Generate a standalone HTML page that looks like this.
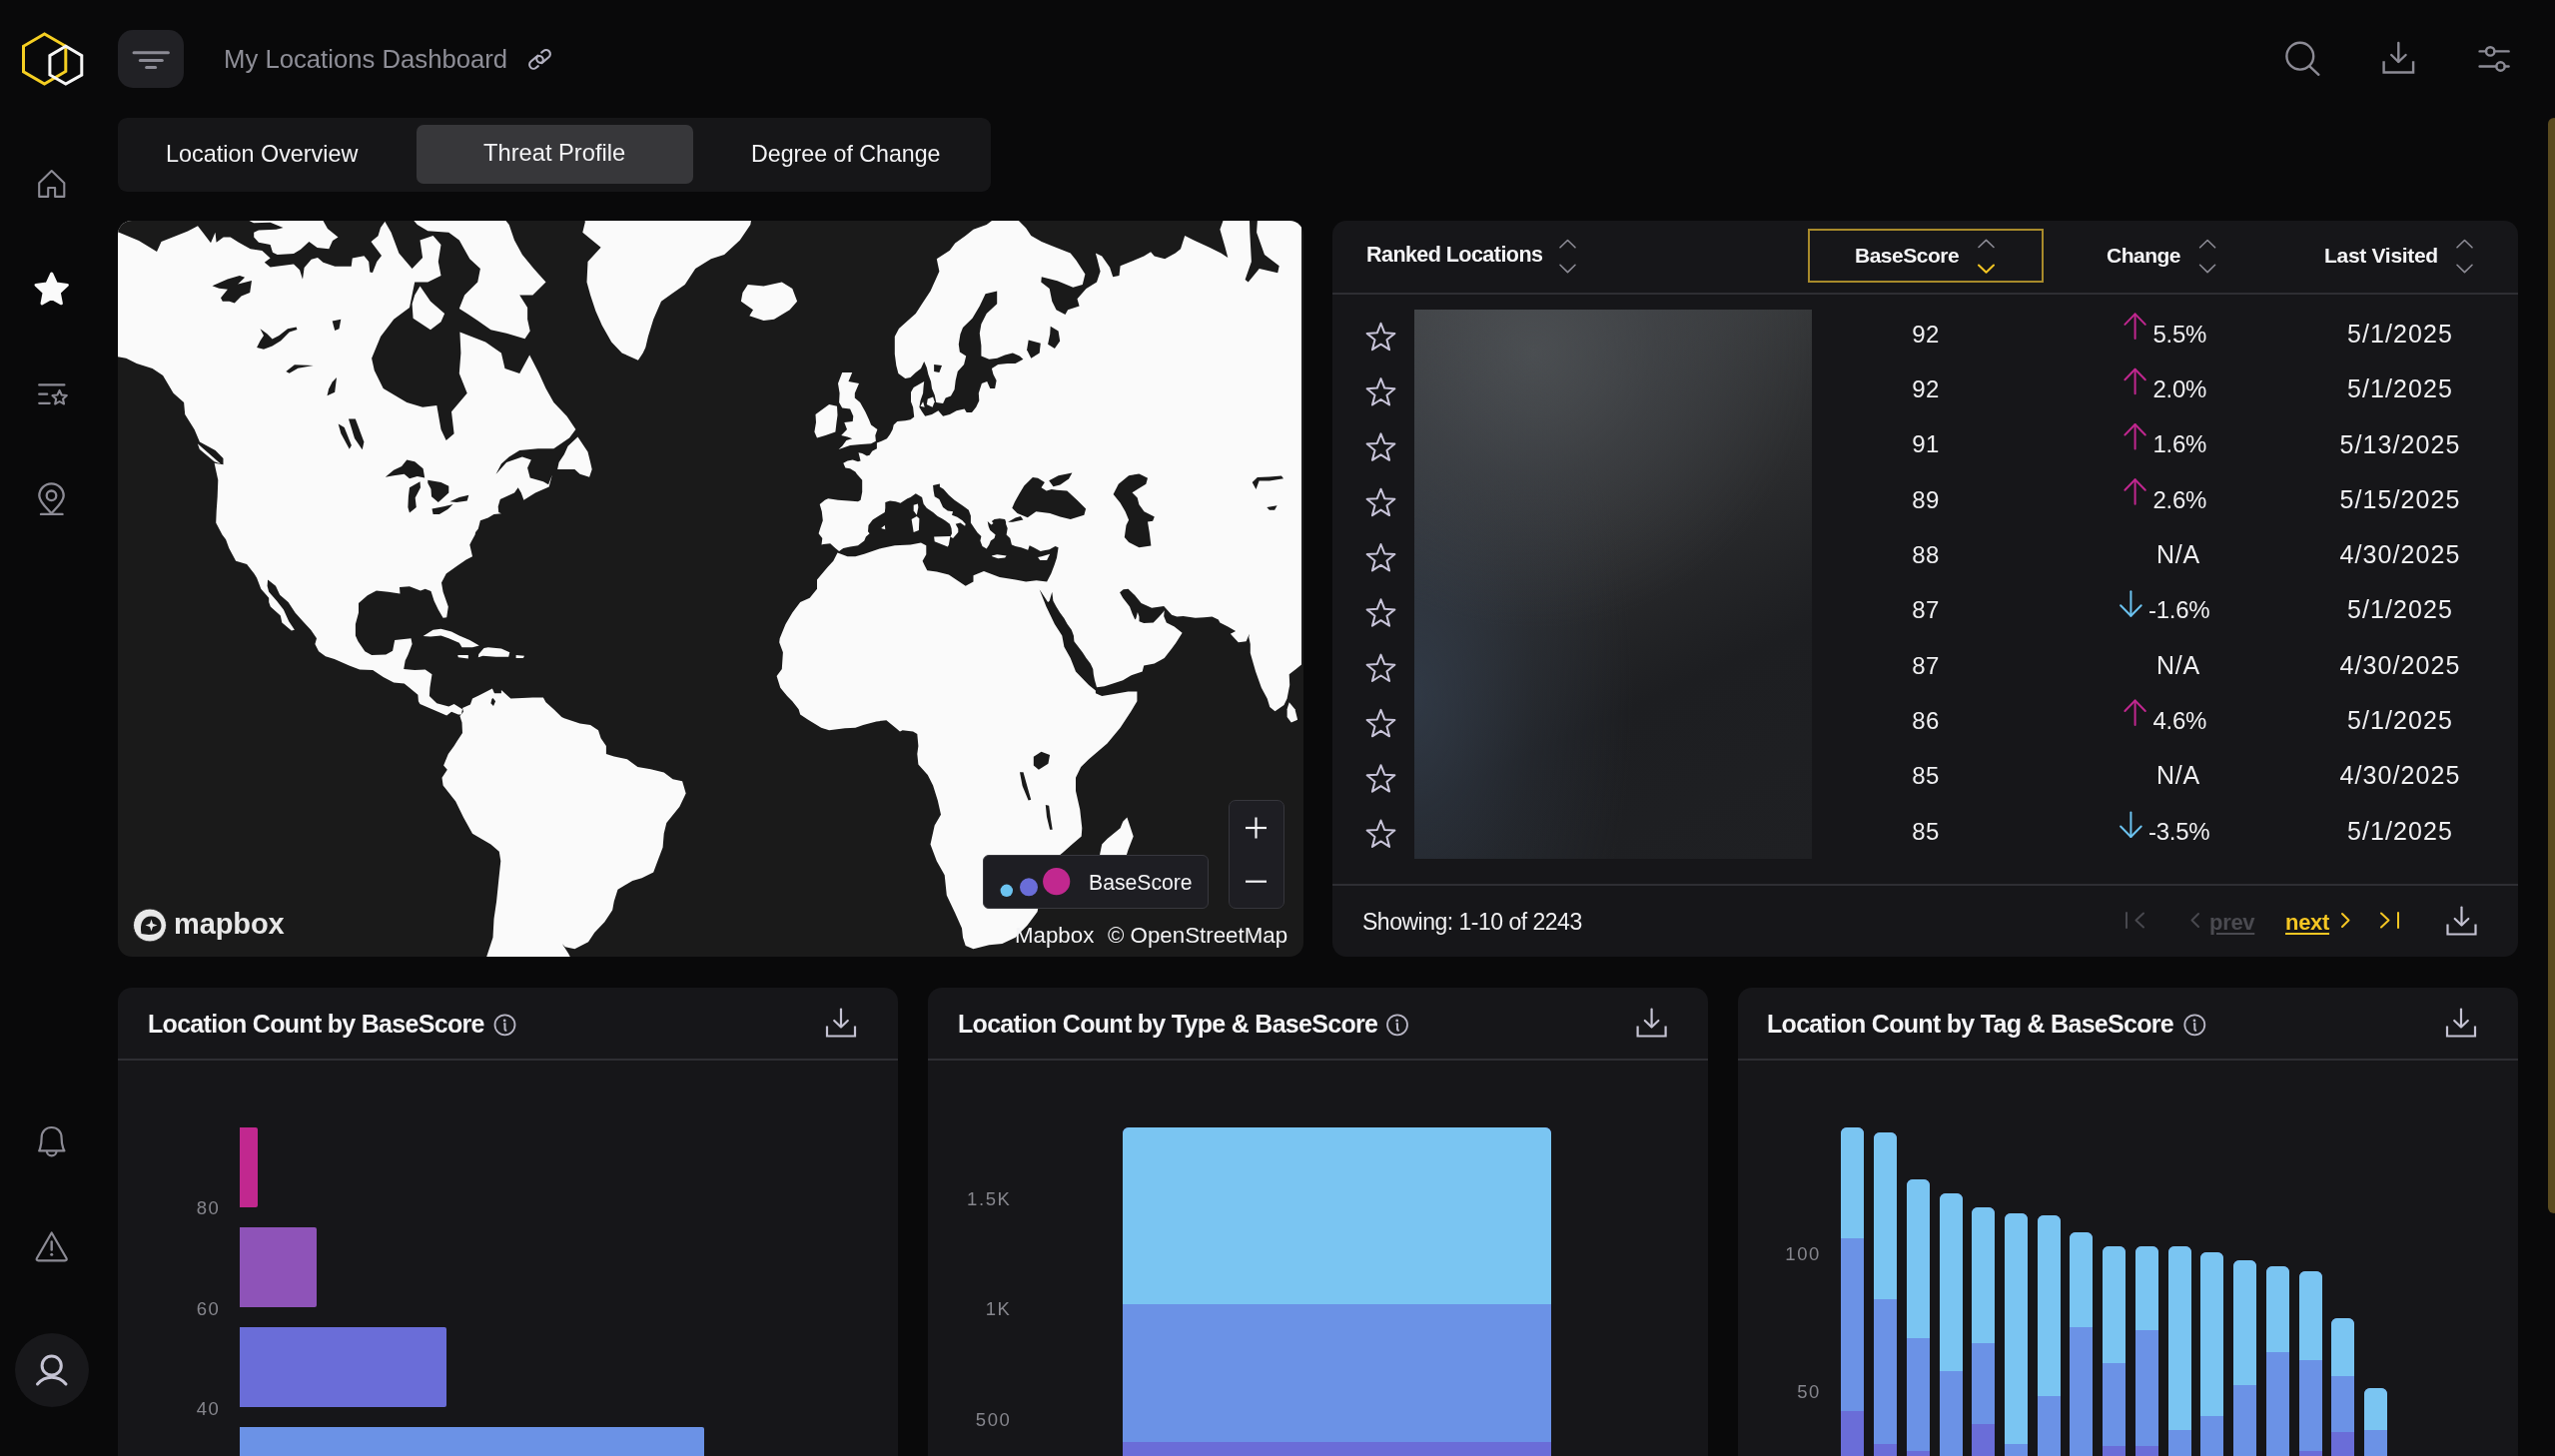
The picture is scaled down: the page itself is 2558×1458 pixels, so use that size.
<!DOCTYPE html>
<html><head><meta charset="utf-8"><style>
*{box-sizing:border-box;margin:0;padding:0}
html,body{width:2558px;height:1458px;overflow:hidden;background:#09090a;font-family:"Liberation Sans",sans-serif;color:#f2f2f4}
.a{position:absolute;white-space:nowrap;will-change:transform}
.panel{position:absolute;background:#161619;border-radius:14px;overflow:hidden}
svg.a{overflow:visible}
.ic{fill:none;stroke:#8c8b95;stroke-width:2.4;stroke-linecap:round;stroke-linejoin:round}
.tab{position:absolute;font-size:23.7px;color:#f4f4f6;line-height:1}
.th{position:absolute;font-size:21px;font-weight:bold;color:#f4f4f6;letter-spacing:-0.5px;line-height:1}
.num{position:absolute;font-size:24px;color:#f0f0f2;line-height:1}
.ct{position:absolute;font-size:25px;font-weight:bold;color:#f4f4f6;letter-spacing:-0.7px;line-height:1}
.yt{position:absolute;font-size:18.5px;color:#86868d;letter-spacing:1.6px;line-height:1;text-align:right}
</style></head><body>
<svg class="a" style="left:0;top:0" width="110" height="110" viewBox="0 0 110 110"><polygon points="44.5,34 23.5,46.3 23.5,71.8 44.5,84 65.8,71.5 65.8,46.3" fill="none" stroke="#f5cf22" stroke-width="3"/><polygon points="65.8,46.3 49.9,55.6 49.9,75 65.8,84 81.8,75 81.8,55.6" fill="none" stroke="#f6f6f6" stroke-width="3"/></svg>
<div class="a" style="left:118px;top:30px;width:66px;height:58px;background:#212125;border-radius:15px"></div>
<svg class="a ic" style="left:0;top:0" width="200" height="100"><line x1="134" y1="52.8" x2="168.4" y2="52.8" stroke-width="3"/><line x1="140.3" y1="60.4" x2="162.3" y2="60.4" stroke-width="3"/><line x1="146.6" y1="67.6" x2="155.6" y2="67.6" stroke-width="3"/></svg>
<div class="a" style="left:223.9px;top:46.7px;font-size:25.7px;line-height:1;color:#8e8e97;font-weight:400;letter-spacing:0px;">My Locations Dashboard</div>
<svg class="a ic" style="left:0;top:0" width="600" height="100"><g transform="translate(540.5,59.4) rotate(-40)" stroke-width="2.1" stroke="#b3b1c0"><path d="M-5.6,4.1 L-8.2,4.1 A4.1,4.1 0 0 1 -8.2,-4.1 L-0.9999999999999996,-4.1 A4.1,4.1 0 0 1 -0.9999999999999996,4.1"/><path d="M5.6,-4.1 L8.2,-4.1 A4.1,4.1 0 0 1 8.2,4.1 L0.9999999999999996,4.1 A4.1,4.1 0 0 1 0.9999999999999996,-4.1"/></g></svg>
<svg class="a ic" style="left:0;top:0" width="2558" height="100" ><circle cx="2302.8" cy="56.2" r="13.4"/><line x1="2312.4" y1="66.3" x2="2321.4" y2="74.8"/><line x1="2401.3" y1="43" x2="2401.3" y2="61.5"/><polyline points="2394.2,55 2401.3,62 2408.6,55"/><polyline points="2386.6,61.2 2386.6,72.5 2416.1,72.5 2416.1,61.2" stroke-linecap="butt" stroke-linejoin="miter"/><line x1="2482.6" y1="51.4" x2="2489" y2="51.4"/><line x1="2497.4" y1="51.4" x2="2511.6" y2="51.4"/><circle cx="2493.2" cy="51.4" r="4.2"/><line x1="2482.6" y1="66.5" x2="2499.3" y2="66.5"/><line x1="2507.7" y1="66.5" x2="2511.6" y2="66.5"/><circle cx="2503.5" cy="66.5" r="4.2"/></svg>
<svg class="a ic" style="left:0;top:0" width="110" height="1458" stroke="#8c8b95"><path d="M39.2,183.2 L51.7,171 L64.3,183.2 L64.3,196.9 L55.1,196.9 L55.1,188 L48.2,188 L48.2,196.9 L39.2,196.9 Z" stroke-width="2.1"/><line x1="39.2" y1="385.4" x2="64.4" y2="385.4" stroke-width="2.2"/><line x1="39.2" y1="394.7" x2="47.2" y2="394.7" stroke-width="2.2"/><line x1="39.2" y1="403.8" x2="49.7" y2="403.8" stroke-width="2.2"/><polygon points="59.60,390.80 61.72,395.49 66.83,396.05 63.02,399.51 64.07,404.55 59.60,402.00 55.13,404.55 56.18,399.51 52.37,396.05 57.48,395.49" stroke-width="2"/><path d="M51.5,514 C46.5,508.5 39.3,502.5 39.3,496.5 A12.2,12.2 0 0 1 63.7,496.5 C63.7,502.5 56.5,508.5 51.5,514 Z" stroke-width="2.3"/><circle cx="51.5" cy="496.3" r="4.8" stroke-width="2.3"/><line x1="41" y1="514.9" x2="62.5" y2="514.9"/><path d="M39.2,1152.4 L64.4,1152.4 C62.2,1148.5 61.6,1144 61.6,1139.5 C61.6,1133 57.2,1129 51.6,1129 C46,1129 41.6,1133 41.6,1139.5 C41.6,1144 41,1148.5 39.2,1152.4 Z" stroke-width="2.2"/><path d="M46.9,1152.8 A4.8,4.6 0 0 0 56.5,1152.8" stroke-width="2.2"/><path d="M51.7,1234.5 L66.5,1260 C67.2,1261.3 66.5,1262.3 65,1262.3 L38.4,1262.3 C36.9,1262.3 36.2,1261.3 36.9,1260 Z" stroke-width="2.2"/><line x1="51.7" y1="1243.5" x2="51.7" y2="1251.5" stroke-width="2.4"/><circle cx="51.7" cy="1256.3" r="1.5" fill="#8c8b95" stroke="none"/></svg>
<svg class="a" style="left:0;top:0" width="110" height="400"><polygon points="51.70,274.00 56.40,284.03 67.39,285.40 59.31,292.97 61.40,303.85 51.70,298.50 42.00,303.85 44.09,292.97 36.01,285.40 47.00,284.03" fill="#fafafa" stroke="#fafafa" stroke-width="3" stroke-linejoin="round"/></svg>
<div class="a" style="left:14.8px;top:1335px;width:74px;height:74px;border-radius:50%;background:#18181b"></div>
<svg class="a" style="left:0;top:0" width="110" height="1458" fill="none" stroke="#c5c3d3" stroke-width="3" stroke-linecap="round"><circle cx="51.7" cy="1367.5" r="9.6"/><path d="M37.5,1386 C45,1377 58.5,1377 66,1386"/></svg>
<div class="a" style="left:118px;top:118px;width:874px;height:74px;background:#161618;border-radius:9px"></div>
<div class="a" style="left:416.8px;top:125.2px;width:276.7px;height:58.8px;background:#37373a;border-radius:7px"></div>
<div class="a" style="left:166.3px;top:142.6px;font-size:23.4px;line-height:1;color:#f4f4f6;font-weight:400;letter-spacing:0px;">Location Overview</div>
<div class="a" style="left:484.1px;top:142.3px;font-size:23.7px;line-height:1;color:#f4f4f6;font-weight:400;letter-spacing:0px;">Threat Profile</div>
<div class="a" style="left:751.5px;top:142.8px;font-size:23.2px;line-height:1;color:#f4f4f6;font-weight:400;letter-spacing:0px;">Degree of Change</div>
<div class="a" style="left:2550.5px;top:118px;width:12px;height:1097px;background:#5b4b1f;border-radius:6px"></div>
<div class="panel" style="left:1333.7px;top:221px;width:1187.3px;height:737px;border-radius:14px"></div>
<div class="a" style="left:1368.2px;top:244.6px;font-size:21.5px;line-height:1;color:#f4f4f6;font-weight:700;letter-spacing:-0.55px;">Ranked Locations</div>
<svg class="a" style="left:0;top:0" width="2558" height="400" fill="none" stroke-width="1.6" stroke-linecap="round" stroke-linejoin="round"><polyline points="1562.0,247.8 1569.5,240.5 1577.0,247.8" stroke="#8c8b95"/><polyline points="1562.0,265.3 1569.5,272.6 1577.0,265.3" stroke="#8c8b95"/></svg>
<div class="a" style="left:1809.8px;top:229.2px;width:235.8px;height:54px;border:2px solid #a88a2b"></div>
<div class="a" style="left:1857.0px;top:245.0px;font-size:21px;line-height:1;color:#f4f4f6;font-weight:700;letter-spacing:-0.5px;">BaseScore</div>
<svg class="a" style="left:0;top:0" width="2558" height="400" fill="none" stroke-width="1.6" stroke-linecap="round" stroke-linejoin="round"><polyline points="1981,247.5 1988.5,240.3 1996,247.5" stroke="#8c8b95"/><polyline points="1981,265.5 1988.5,272.8 1996,265.5" stroke="#f5c623" stroke-width="2"/></svg>
<div class="a" style="left:2109.4px;top:245.0px;font-size:21px;line-height:1;color:#f4f4f6;font-weight:700;letter-spacing:-0.5px;">Change</div>
<svg class="a" style="left:0;top:0" width="2558" height="400" fill="none" stroke-width="1.6" stroke-linecap="round" stroke-linejoin="round"><polyline points="2202.6,247.8 2210.1,240.5 2217.6,247.8" stroke="#8c8b95"/><polyline points="2202.6,265.3 2210.1,272.6 2217.6,265.3" stroke="#8c8b95"/></svg>
<div class="a" style="left:2326.6px;top:245.0px;font-size:21px;line-height:1;color:#f4f4f6;font-weight:700;letter-spacing:-0.3px;">Last Visited</div>
<svg class="a" style="left:0;top:0" width="2558" height="400" fill="none" stroke-width="1.6" stroke-linecap="round" stroke-linejoin="round"><polyline points="2460.0,247.8 2467.5,240.5 2475.0,247.8" stroke="#8c8b95"/><polyline points="2460.0,265.3 2467.5,272.6 2475.0,265.3" stroke="#8c8b95"/></svg>
<div class="a" style="left:1333.7px;top:293.3px;width:1187.3px;height:2px;background:#2e2e33"></div>
<div class="a" style="left:1415.7px;top:309.8px;width:397.5px;height:550.2px;background:radial-gradient(ellipse 70% 50% at 30% 8%, rgba(80,84,88,0.75) 0%, rgba(72,75,80,0.45) 45%, rgba(60,64,70,0) 100%),radial-gradient(ellipse 55% 75% at 0% 70%, rgba(50,60,74,0.85) 0%, rgba(45,52,62,0.4) 55%, rgba(40,45,52,0) 100%),linear-gradient(155deg, #404244 0%, #37393b 22%, #2a2b2d 45%, #1d1e21 68%, #1f2023 100%)"></div>
<div class="a" style="left:1627.7px;width:600px;text-align:center;top:322.8px;font-size:24px;line-height:1;color:#f0f0f2;font-weight:400;letter-spacing:0.3px;">92</div>
<div class="a" style="left:2102.5px;width:600px;text-align:center;top:321.9px;font-size:25px;line-height:1;color:#f0f0f2;font-weight:400;letter-spacing:1.1px;">5/1/2025</div>
<div class="a" style="left:1900px;text-align:right;top:322.8px;font-size:24px;line-height:1;color:#f0f0f2;letter-spacing:-0.3px;width:309px">5.5%</div>
<div class="a" style="left:1627.7px;width:600px;text-align:center;top:378.1px;font-size:24px;line-height:1;color:#f0f0f2;font-weight:400;letter-spacing:0.3px;">92</div>
<div class="a" style="left:2102.5px;width:600px;text-align:center;top:377.2px;font-size:25px;line-height:1;color:#f0f0f2;font-weight:400;letter-spacing:1.1px;">5/1/2025</div>
<div class="a" style="left:1900px;text-align:right;top:378.1px;font-size:24px;line-height:1;color:#f0f0f2;letter-spacing:-0.3px;width:309px">2.0%</div>
<div class="a" style="left:1627.7px;width:600px;text-align:center;top:433.4px;font-size:24px;line-height:1;color:#f0f0f2;font-weight:400;letter-spacing:0.3px;">91</div>
<div class="a" style="left:2102.5px;width:600px;text-align:center;top:432.5px;font-size:25px;line-height:1;color:#f0f0f2;font-weight:400;letter-spacing:1.1px;">5/13/2025</div>
<div class="a" style="left:1900px;text-align:right;top:433.4px;font-size:24px;line-height:1;color:#f0f0f2;letter-spacing:-0.3px;width:309px">1.6%</div>
<div class="a" style="left:1627.7px;width:600px;text-align:center;top:488.7px;font-size:24px;line-height:1;color:#f0f0f2;font-weight:400;letter-spacing:0.3px;">89</div>
<div class="a" style="left:2102.5px;width:600px;text-align:center;top:487.8px;font-size:25px;line-height:1;color:#f0f0f2;font-weight:400;letter-spacing:1.1px;">5/15/2025</div>
<div class="a" style="left:1900px;text-align:right;top:488.7px;font-size:24px;line-height:1;color:#f0f0f2;letter-spacing:-0.3px;width:309px">2.6%</div>
<div class="a" style="left:1627.7px;width:600px;text-align:center;top:544.0px;font-size:24px;line-height:1;color:#f0f0f2;font-weight:400;letter-spacing:0.3px;">88</div>
<div class="a" style="left:2102.5px;width:600px;text-align:center;top:543.1px;font-size:25px;line-height:1;color:#f0f0f2;font-weight:400;letter-spacing:1.1px;">4/30/2025</div>
<div class="a" style="left:1880.5px;width:600px;text-align:center;top:543.1px;font-size:25px;line-height:1;color:#f0f0f2;font-weight:400;letter-spacing:0.8px;">N/A</div>
<div class="a" style="left:1627.7px;width:600px;text-align:center;top:599.3px;font-size:24px;line-height:1;color:#f0f0f2;font-weight:400;letter-spacing:0.3px;">87</div>
<div class="a" style="left:2102.5px;width:600px;text-align:center;top:598.4px;font-size:25px;line-height:1;color:#f0f0f2;font-weight:400;letter-spacing:1.1px;">5/1/2025</div>
<div class="a" style="left:1900px;text-align:right;top:599.3px;font-size:24px;line-height:1;color:#f0f0f2;letter-spacing:-0.3px;width:312.3px">-1.6%</div>
<div class="a" style="left:1627.7px;width:600px;text-align:center;top:654.6px;font-size:24px;line-height:1;color:#f0f0f2;font-weight:400;letter-spacing:0.3px;">87</div>
<div class="a" style="left:2102.5px;width:600px;text-align:center;top:653.7px;font-size:25px;line-height:1;color:#f0f0f2;font-weight:400;letter-spacing:1.1px;">4/30/2025</div>
<div class="a" style="left:1880.5px;width:600px;text-align:center;top:653.7px;font-size:25px;line-height:1;color:#f0f0f2;font-weight:400;letter-spacing:0.8px;">N/A</div>
<div class="a" style="left:1627.7px;width:600px;text-align:center;top:709.9px;font-size:24px;line-height:1;color:#f0f0f2;font-weight:400;letter-spacing:0.3px;">86</div>
<div class="a" style="left:2102.5px;width:600px;text-align:center;top:709.0px;font-size:25px;line-height:1;color:#f0f0f2;font-weight:400;letter-spacing:1.1px;">5/1/2025</div>
<div class="a" style="left:1900px;text-align:right;top:709.9px;font-size:24px;line-height:1;color:#f0f0f2;letter-spacing:-0.3px;width:309px">4.6%</div>
<div class="a" style="left:1627.7px;width:600px;text-align:center;top:765.2px;font-size:24px;line-height:1;color:#f0f0f2;font-weight:400;letter-spacing:0.3px;">85</div>
<div class="a" style="left:2102.5px;width:600px;text-align:center;top:764.3px;font-size:25px;line-height:1;color:#f0f0f2;font-weight:400;letter-spacing:1.1px;">4/30/2025</div>
<div class="a" style="left:1880.5px;width:600px;text-align:center;top:764.3px;font-size:25px;line-height:1;color:#f0f0f2;font-weight:400;letter-spacing:0.8px;">N/A</div>
<div class="a" style="left:1627.7px;width:600px;text-align:center;top:820.5px;font-size:24px;line-height:1;color:#f0f0f2;font-weight:400;letter-spacing:0.3px;">85</div>
<div class="a" style="left:2102.5px;width:600px;text-align:center;top:819.6px;font-size:25px;line-height:1;color:#f0f0f2;font-weight:400;letter-spacing:1.1px;">5/1/2025</div>
<div class="a" style="left:1900px;text-align:right;top:820.5px;font-size:24px;line-height:1;color:#f0f0f2;letter-spacing:-0.3px;width:312.3px">-3.5%</div>
<svg class="a" style="left:0;top:0" width="2558" height="1000" fill="none" stroke-linecap="round" stroke-linejoin="round"><g stroke="#c0278f" stroke-width="2"><line x1="2137.6" y1="314.4" x2="2137.6" y2="338.9"/><polyline points="2127.4,324.9 2137.6,314.4 2147.7999999999997,324.9"/></g><polygon points="1382.50,323.80 1386.20,333.30 1396.39,333.89 1388.49,340.35 1391.08,350.21 1382.50,344.70 1373.92,350.21 1376.51,340.35 1368.61,333.89 1378.80,333.30" stroke="#c9c5da" stroke-width="2"/><g stroke="#c0278f" stroke-width="2"><line x1="2137.6" y1="369.7" x2="2137.6" y2="394.2"/><polyline points="2127.4,380.2 2137.6,369.7 2147.7999999999997,380.2"/></g><polygon points="1382.50,379.10 1386.20,388.60 1396.39,389.19 1388.49,395.65 1391.08,405.51 1382.50,400.00 1373.92,405.51 1376.51,395.65 1368.61,389.19 1378.80,388.60" stroke="#c9c5da" stroke-width="2"/><g stroke="#c0278f" stroke-width="2"><line x1="2137.6" y1="425.0" x2="2137.6" y2="449.5"/><polyline points="2127.4,435.5 2137.6,425.0 2147.7999999999997,435.5"/></g><polygon points="1382.50,434.40 1386.20,443.90 1396.39,444.49 1388.49,450.95 1391.08,460.81 1382.50,455.30 1373.92,460.81 1376.51,450.95 1368.61,444.49 1378.80,443.90" stroke="#c9c5da" stroke-width="2"/><g stroke="#c0278f" stroke-width="2"><line x1="2137.6" y1="480.3" x2="2137.6" y2="504.8"/><polyline points="2127.4,490.8 2137.6,480.3 2147.7999999999997,490.8"/></g><polygon points="1382.50,489.70 1386.20,499.20 1396.39,499.79 1388.49,506.25 1391.08,516.11 1382.50,510.60 1373.92,516.11 1376.51,506.25 1368.61,499.79 1378.80,499.20" stroke="#c9c5da" stroke-width="2"/><polygon points="1382.50,545.00 1386.20,554.50 1396.39,555.09 1388.49,561.55 1391.08,571.41 1382.50,565.90 1373.92,571.41 1376.51,561.55 1368.61,555.09 1378.80,554.50" stroke="#c9c5da" stroke-width="2"/><g stroke="#6cc3f0" stroke-width="2"><line x1="2133.4" y1="592.3" x2="2133.4" y2="616.8"/><polyline points="2123.1,606.3 2133.4,616.8 2143.7000000000003,606.3"/></g><polygon points="1382.50,600.30 1386.20,609.80 1396.39,610.39 1388.49,616.85 1391.08,626.71 1382.50,621.20 1373.92,626.71 1376.51,616.85 1368.61,610.39 1378.80,609.80" stroke="#c9c5da" stroke-width="2"/><polygon points="1382.50,655.60 1386.20,665.10 1396.39,665.69 1388.49,672.15 1391.08,682.01 1382.50,676.50 1373.92,682.01 1376.51,672.15 1368.61,665.69 1378.80,665.10" stroke="#c9c5da" stroke-width="2"/><g stroke="#c0278f" stroke-width="2"><line x1="2137.6" y1="701.5" x2="2137.6" y2="726.0"/><polyline points="2127.4,712.0 2137.6,701.5 2147.7999999999997,712.0"/></g><polygon points="1382.50,710.90 1386.20,720.40 1396.39,720.99 1388.49,727.45 1391.08,737.31 1382.50,731.80 1373.92,737.31 1376.51,727.45 1368.61,720.99 1378.80,720.40" stroke="#c9c5da" stroke-width="2"/><polygon points="1382.50,766.20 1386.20,775.70 1396.39,776.29 1388.49,782.75 1391.08,792.61 1382.50,787.10 1373.92,792.61 1376.51,782.75 1368.61,776.29 1378.80,775.70" stroke="#c9c5da" stroke-width="2"/><g stroke="#6cc3f0" stroke-width="2"><line x1="2133.4" y1="813.5" x2="2133.4" y2="838.0"/><polyline points="2123.1,827.5 2133.4,838.0 2143.7000000000003,827.5"/></g><polygon points="1382.50,821.50 1386.20,831.00 1396.39,831.59 1388.49,838.05 1391.08,847.91 1382.50,842.40 1373.92,847.91 1376.51,838.05 1368.61,831.59 1378.80,831.00" stroke="#c9c5da" stroke-width="2"/></svg>
<div class="a" style="left:1333.7px;top:885px;width:1187.3px;height:2px;background:#2e2e33"></div>
<div class="a" style="left:1363.6px;top:911.5px;font-size:23px;line-height:1;color:#f0f0f2;font-weight:400;letter-spacing:-0.5px;">Showing: 1-10 of 2243</div>
<svg class="a" style="left:0;top:0" width="2558" height="1000" fill="none" stroke-linecap="round" stroke-linejoin="round" stroke-width="2"><line x1="2129" y1="914" x2="2129" y2="929" stroke="#48484e"/><polyline points="2146,914.5 2138.5,921.5 2146,928.5" stroke="#48484e"/><polyline points="2201,915 2194.5,921.5 2201,928" stroke="#48484e"/><polyline points="2345,915 2351.5,921.5 2345,928" stroke="#f5c623"/><polyline points="2384,914.5 2391.5,921.5 2384,928.5" stroke="#f5c623"/><line x1="2401" y1="914" x2="2401" y2="929" stroke="#f5c623"/></svg>
<div class="a" style="left:2211.5px;top:912.9px;font-size:22px;line-height:1;color:#4a4a50;font-weight:700;letter-spacing:-0.3px;text-decoration:underline;text-underline-offset:3px">prev</div>
<div class="a" style="left:2287.5px;top:912.9px;font-size:22px;line-height:1;color:#f5c623;font-weight:700;letter-spacing:-0.3px;text-decoration:underline;text-underline-offset:3px">next</div>
<svg class="a" style="left:0;top:0" width="2558" height="1458" fill="none" stroke="#c5c3d3" stroke-width="2.2" stroke-linecap="round" stroke-linejoin="round"><line x1="2464.5" y1="908.5" x2="2464.5" y2="926.0"/><polyline points="2457.7,920.0 2464.5,926.5 2471.3,920.0"/><polyline points="2450.5,925.5 2450.5,935.5 2478.5,935.5 2478.5,925.5" stroke-linecap="butt" stroke-linejoin="miter"/></svg>
<div class="panel" style="left:118.2px;top:989px;width:780.7px;height:520px"></div>
<div class="a" style="left:118.2px;top:1060px;width:780.7px;height:2px;background:#2e2e33"></div>
<div class="a" style="left:147.8px;top:1013.0px;font-size:25px;line-height:1;color:#f4f4f6;font-weight:700;letter-spacing:-0.7px;">Location Count by BaseScore</div>
<svg class="a" style="left:0;top:0" width="2558" height="1458" fill="none" stroke="#b9b7c6" stroke-width="1.8"><circle cx="505.5" cy="1026.3" r="10"/><path d="M504.2,1025.3 L505.5,1025.3 L505.5,1030.2 Q505.5,1031.8 507.3,1031.8" stroke-width="2"/><circle cx="505.2" cy="1021.9" r="1.4" fill="#b9b7c6" stroke="none"/></svg>
<div class="panel" style="left:929.2px;top:989px;width:781.3px;height:520px"></div>
<div class="a" style="left:929.2px;top:1060px;width:781.3px;height:2px;background:#2e2e33"></div>
<div class="a" style="left:958.7px;top:1013.0px;font-size:25px;line-height:1;color:#f4f4f6;font-weight:700;letter-spacing:-0.7px;">Location Count by Type &amp; BaseScore</div>
<svg class="a" style="left:0;top:0" width="2558" height="1458" fill="none" stroke="#b9b7c6" stroke-width="1.8"><circle cx="1399" cy="1026.3" r="10"/><path d="M1397.7,1025.3 L1399,1025.3 L1399,1030.2 Q1399,1031.8 1400.8,1031.8" stroke-width="2"/><circle cx="1398.7" cy="1021.9" r="1.4" fill="#b9b7c6" stroke="none"/></svg>
<div class="panel" style="left:1739.8px;top:989px;width:781.2px;height:520px"></div>
<div class="a" style="left:1739.8px;top:1060px;width:781.2px;height:2px;background:#2e2e33"></div>
<div class="a" style="left:1769.4px;top:1013.0px;font-size:25px;line-height:1;color:#f4f4f6;font-weight:700;letter-spacing:-0.7px;">Location Count by Tag &amp; BaseScore</div>
<svg class="a" style="left:0;top:0" width="2558" height="1458" fill="none" stroke="#b9b7c6" stroke-width="1.8"><circle cx="2197.3" cy="1026.3" r="10"/><path d="M2196.0,1025.3 L2197.3,1025.3 L2197.3,1030.2 Q2197.3,1031.8 2199.1000000000004,1031.8" stroke-width="2"/><circle cx="2197.0" cy="1021.9" r="1.4" fill="#b9b7c6" stroke="none"/></svg>
<svg class="a" style="left:0;top:0" width="2558" height="1458" fill="none" stroke="#c5c3d3" stroke-width="2.2" stroke-linecap="round" stroke-linejoin="round"><line x1="842.0" y1="1010.5" x2="842.0" y2="1028.0"/><polyline points="835.2,1022.0 842.0,1028.5 848.8,1022.0"/><polyline points="828.0,1027.5 828.0,1037.5 856.0,1037.5 856.0,1027.5" stroke-linecap="butt" stroke-linejoin="miter"/></svg>
<svg class="a" style="left:0;top:0" width="2558" height="1458" fill="none" stroke="#c5c3d3" stroke-width="2.2" stroke-linecap="round" stroke-linejoin="round"><line x1="1653.6" y1="1010.5" x2="1653.6" y2="1028.0"/><polyline points="1646.8,1022.0 1653.6,1028.5 1660.4,1022.0"/><polyline points="1639.6,1027.5 1639.6,1037.5 1667.6,1037.5 1667.6,1027.5" stroke-linecap="butt" stroke-linejoin="miter"/></svg>
<svg class="a" style="left:0;top:0" width="2558" height="1458" fill="none" stroke="#c5c3d3" stroke-width="2.2" stroke-linecap="round" stroke-linejoin="round"><line x1="2464.0" y1="1010.5" x2="2464.0" y2="1028.0"/><polyline points="2457.2,1022.0 2464.0,1028.5 2470.8,1022.0"/><polyline points="2450.0,1027.5 2450.0,1037.5 2478.0,1037.5 2478.0,1027.5" stroke-linecap="butt" stroke-linejoin="miter"/></svg>
<div class="a" style="left:240px;top:1128.7px;width:17.7px;height:80.1px;background:#c1288f;border-radius:0 2px 2px 0"></div>
<div class="a" style="left:240px;top:1228.5px;width:77.2px;height:79.8px;background:#8e53b8;border-radius:0 2px 2px 0"></div>
<div class="a" style="left:240px;top:1328.6px;width:206.8px;height:79.5px;background:#6a6dd8;border-radius:0 2px 2px 0"></div>
<div class="a" style="left:240px;top:1428.5px;width:464.9px;height:71.5px;background:#6b92e6;border-radius:0 2px 2px 0"></div>
<div class="a yt" style="left:150px;width:70.5px;top:1201.3px">80</div>
<div class="a yt" style="left:150px;width:70.5px;top:1302.1px">60</div>
<div class="a yt" style="left:150px;width:70.5px;top:1402.2px">40</div>
<div class="a" style="left:1123.5px;top:1128.7px;width:428.5px;height:400px;border-radius:6px 6px 0 0;overflow:hidden;background:#6a6dd8"><div style="position:absolute;left:0;top:0;width:100%;height:177.3px;background:#7ac5f2"></div><div style="position:absolute;left:0;top:177.3px;width:100%;height:137.9px;background:#6b92e6"></div></div>
<div class="a yt" style="left:930px;width:82.5px;top:1191.5px">1.5K</div>
<div class="a yt" style="left:930px;width:82.5px;top:1302.1px">1K</div>
<div class="a yt" style="left:930px;width:82.5px;top:1413.1px">500</div>
<div class="a" style="left:1843.4px;top:1128.7px;width:22.8px;height:371.3px;border-radius:6px 6px 0 0;overflow:hidden;background:#6b92e6"><div style="position:absolute;left:0;top:0;width:100%;height:111.3px;background:#7ac5f2"></div><div style="position:absolute;left:0;top:283.5px;width:100%;height:100px;background:#6a6dd8"></div></div>
<div class="a" style="left:1876.1px;top:1134px;width:22.8px;height:366.0px;border-radius:6px 6px 0 0;overflow:hidden;background:#6b92e6"><div style="position:absolute;left:0;top:0;width:100%;height:167.0px;background:#7ac5f2"></div><div style="position:absolute;left:0;top:311.5px;width:100%;height:100px;background:#6a6dd8"></div></div>
<div class="a" style="left:1908.8px;top:1181.2px;width:22.8px;height:318.8px;border-radius:6px 6px 0 0;overflow:hidden;background:#6b92e6"><div style="position:absolute;left:0;top:0;width:100%;height:158.6px;background:#7ac5f2"></div><div style="position:absolute;left:0;top:272.3px;width:100%;height:100px;background:#6a6dd8"></div></div>
<div class="a" style="left:1941.6px;top:1195.4px;width:22.8px;height:304.6px;border-radius:6px 6px 0 0;overflow:hidden;background:#6b92e6"><div style="position:absolute;left:0;top:0;width:100%;height:177.6px;background:#7ac5f2"></div></div>
<div class="a" style="left:1974.3px;top:1209.2px;width:22.8px;height:290.8px;border-radius:6px 6px 0 0;overflow:hidden;background:#6b92e6"><div style="position:absolute;left:0;top:0;width:100%;height:136.2px;background:#7ac5f2"></div><div style="position:absolute;left:0;top:216.8px;width:100%;height:100px;background:#6a6dd8"></div></div>
<div class="a" style="left:2007.0px;top:1214.7px;width:22.8px;height:285.3px;border-radius:6px 6px 0 0;overflow:hidden;background:#6b92e6"><div style="position:absolute;left:0;top:0;width:100%;height:230.5px;background:#7ac5f2"></div></div>
<div class="a" style="left:2039.7px;top:1217.4px;width:22.8px;height:282.6px;border-radius:6px 6px 0 0;overflow:hidden;background:#6b92e6"><div style="position:absolute;left:0;top:0;width:100%;height:180.6px;background:#7ac5f2"></div></div>
<div class="a" style="left:2072.4px;top:1234.1px;width:22.8px;height:265.9px;border-radius:6px 6px 0 0;overflow:hidden;background:#6b92e6"><div style="position:absolute;left:0;top:0;width:100%;height:94.6px;background:#7ac5f2"></div></div>
<div class="a" style="left:2105.2px;top:1247.9px;width:22.8px;height:252.1px;border-radius:6px 6px 0 0;overflow:hidden;background:#6b92e6"><div style="position:absolute;left:0;top:0;width:100%;height:116.9px;background:#7ac5f2"></div><div style="position:absolute;left:0;top:200.0px;width:100%;height:100px;background:#6a6dd8"></div></div>
<div class="a" style="left:2137.9px;top:1247.9px;width:22.8px;height:252.1px;border-radius:6px 6px 0 0;overflow:hidden;background:#6b92e6"><div style="position:absolute;left:0;top:0;width:100%;height:83.7px;background:#7ac5f2"></div><div style="position:absolute;left:0;top:200.0px;width:100%;height:100px;background:#6a6dd8"></div></div>
<div class="a" style="left:2170.6px;top:1247.9px;width:22.8px;height:252.1px;border-radius:6px 6px 0 0;overflow:hidden;background:#6b92e6"><div style="position:absolute;left:0;top:0;width:100%;height:183.5px;background:#7ac5f2"></div></div>
<div class="a" style="left:2203.3px;top:1253.5px;width:22.8px;height:246.5px;border-radius:6px 6px 0 0;overflow:hidden;background:#6b92e6"><div style="position:absolute;left:0;top:0;width:100%;height:164.1px;background:#7ac5f2"></div></div>
<div class="a" style="left:2236.0px;top:1261.7px;width:22.8px;height:238.3px;border-radius:6px 6px 0 0;overflow:hidden;background:#6b92e6"><div style="position:absolute;left:0;top:0;width:100%;height:125.3px;background:#7ac5f2"></div></div>
<div class="a" style="left:2268.8px;top:1267.6px;width:22.8px;height:232.4px;border-radius:6px 6px 0 0;overflow:hidden;background:#6b92e6"><div style="position:absolute;left:0;top:0;width:100%;height:86.0px;background:#7ac5f2"></div></div>
<div class="a" style="left:2301.5px;top:1273.2px;width:22.8px;height:226.8px;border-radius:6px 6px 0 0;overflow:hidden;background:#6b92e6"><div style="position:absolute;left:0;top:0;width:100%;height:88.6px;background:#7ac5f2"></div><div style="position:absolute;left:0;top:180.3px;width:100%;height:100px;background:#6a6dd8"></div></div>
<div class="a" style="left:2334.2px;top:1320.4px;width:22.8px;height:179.6px;border-radius:6px 6px 0 0;overflow:hidden;background:#6b92e6"><div style="position:absolute;left:0;top:0;width:100%;height:58.2px;background:#7ac5f2"></div><div style="position:absolute;left:0;top:113.9px;width:100%;height:100px;background:#6a6dd8"></div></div>
<div class="a" style="left:2366.9px;top:1389.7px;width:22.8px;height:110.3px;border-radius:6px 6px 0 0;overflow:hidden;background:#6b92e6"><div style="position:absolute;left:0;top:0;width:100%;height:41.7px;background:#7ac5f2"></div></div>
<div class="a yt" style="left:1740px;width:83px;top:1246.5px">100</div>
<div class="a yt" style="left:1740px;width:83px;top:1385.2px">50</div>
<div class="panel" style="left:118px;top:221px;width:1187px;height:737.2px;background:#1a1a1a;border-radius:14px"><svg width="1185" height="737" viewBox="0 0 1185 737" style="position:absolute;left:0;top:0">
<path fill="#fafafa" d="M-141.3 -76.1L255.2 -76.1L255.2 -20.5L273.6 11.8L281.4 32.6L294.6 48.1L305.1 36.9L302.5 19.4L315.6 14.9L323.5 23.9L320.8 41.1L323.5 54.9L310.3 61.5L297.2 61.5L292.0 86.9L276.2 98.8L263.1 116.1L254.1 137.7L256.8 150.1L265.7 167.9L289.3 182.1L305.1 186.7L319.3 184.9L323.5 208.9L328.7 220.0L336.6 213.2L334.0 191.2L349.7 172.7L341.8 153.1L343.4 132.4L342.4 111.5L368.1 121.6L383.9 132.4L387.5 148.1L402.2 153.1L412.2 134.6L421.7 153.1L428.5 167.9L436.4 182.1L449.5 195.7L458.4 208.9L452.1 217.4L436.4 228.2L420.6 228.2L402.2 229.9L391.7 236.4L383.9 243.5L378.6 253.7L389.1 242.0L404.9 236.4L413.8 239.6L410.1 247.5L412.7 257.5L425.9 261.3L431.1 264.3L434.8 254.4L431.7 266.6L418.0 272.5L406.4 279.8L403.8 272.5L400.7 267.3L397.0 272.5L382.8 279.1L380.7 286.3L381.2 291.9L383.9 293.3L376.5 294.0L370.7 297.5L362.9 300.3L360.8 308.5L358.1 311.9L357.6 314.6L353.9 321.3L352.3 324.6L355.0 336.3L348.7 339.5L340.3 345.2L328.7 353.4L324.0 362.6L325.6 371.7L330.8 386.6L329.2 397.2L325.6 397.8L320.8 389.6L316.6 380.7L313.5 371.1L307.7 368.7L303.0 370.5L292.0 366.3L282.0 366.9L282.5 373.5L270.9 371.7L258.9 370.5L249.9 375.3L241.0 383.1L241.0 392.5L237.9 404.1L237.9 415.5L240.5 421.2L247.3 431.2L254.1 435.1L268.3 434.6L275.1 430.7L277.2 420.0L293.5 418.3L294.6 424.0L290.4 435.1L287.7 440.6L286.2 448.9L297.2 450.0L307.7 449.4L314.5 454.3L312.4 467.8L311.9 475.9L319.3 483.3L331.3 486.5L336.6 483.9L345.0 489.2L343.9 494.5L340.8 494.5L334.0 491.8L329.2 495.6L318.2 490.8L302.5 483.9L300.9 481.2L300.4 474.8L292.0 467.8L286.7 463.5L276.2 462.4L265.7 457.0L255.2 450.0L242.1 449.4L231.6 445.6L216.8 439.0L207.9 436.2L201.1 431.2L197.4 424.0L199.0 418.3L193.2 409.8L185.3 401.2L177.5 392.5L170.6 381.9L162.2 374.7L158.0 365.7L150.1 359.5L149.6 365.7L151.2 371.7L159.1 380.7L165.9 389.6L171.2 401.2L176.9 409.8L173.8 410.4L164.3 402.4L162.8 395.4L152.8 386.6L151.2 381.9L151.2 377.7L143.3 368.7L139.1 357.7L136.5 353.4L129.1 343.9L118.1 340.8L111.3 327.9L108.1 319.3L104.5 314.6L98.2 302.4L98.7 290.5L99.7 276.2L100.3 259.8L96.6 242.7L105.5 244.3L105.5 238.0L97.6 229.9L81.9 221.6L76.6 208.9L67.2 193.9L66.1 182.1L55.6 172.7L45.1 155.1L34.6 148.1L18.8 142.9L8.3 137.7L-4.8 135.6L-17.9 132.4L-33.7 127.1L-46.8 137.7L-115.1 116.1Z"/>
<path fill="#fafafa" d="M436.4 -76.1L462.6 -12.1L467.9 0.9L465.3 11.8L483.6 26.8L470.5 41.1L469.5 61.5L473.1 74.4L478.4 90.5L484.7 104.7L494.2 121.6L504.7 132.4L520.9 139.8L525.7 132.4L528.3 127.1L530.9 116.1L536.2 98.8L544.0 80.7L554.5 73.2L567.7 64.1L578.2 48.1L593.9 38.3L607.1 34.1L622.8 19.4L633.3 4.0L636.0 -12.1L646.5 -76.1Z"/>
<path fill="#fafafa" d="M646.5 100.0L632.3 95.3L636.0 89.3L623.9 80.7L625.5 71.9L630.7 64.1L646.5 65.4L664.8 61.5L675.3 68.0L680.1 80.7L672.7 89.3L657.0 98.8Z"/>
<path fill="#fafafa" d="M278.8 -20.5L299.8 4.0L310.3 10.3L331.3 11.8L341.8 19.4L352.3 38.3L362.9 48.1L360.2 61.5L347.1 74.4L341.8 88.1L349.7 92.9L360.2 100.0L373.4 109.3L389.1 112.7L407.5 118.3L412.7 110.4L410.1 98.8L410.1 86.9L402.2 74.4L415.4 74.4L428.5 61.5L416.4 48.1L404.9 34.1L397.0 19.4L391.7 4.0L378.6 -12.1L357.6 -20.5Z"/>
<path fill="#fafafa" d="M302.5 65.4L313.0 80.7L327.1 92.9L323.5 101.2L313.0 109.3L295.6 97.7L294.6 83.2L297.2 74.4Z"/>
<path fill="#fafafa" d="M460.5 216.6L470.5 231.5L473.1 242.0L474.7 249.0L472.1 256.7L462.6 253.7L457.4 249.0L440.1 249.0L441.6 242.0L446.9 233.9L450.6 225.8Z"/>
<path fill="#fafafa" d="M102.9 243.5L79.8 223.3L81.9 229.1L96.6 241.2Z"/>
<path fill="#fafafa" d="M305.6 416.1L315.6 409.8L323.5 408.7L334.0 411.5L341.8 415.5L352.3 420.0L361.8 425.6L355.0 427.3L344.5 427.3L341.8 422.8L331.3 418.3L323.5 415.5L313.0 416.6Z"/>
<path fill="#fafafa" d="M370.7 427.3L383.9 428.4L392.3 432.3L391.2 436.8L378.6 436.8L365.5 435.7L360.8 437.3L361.3 434.0L366.5 427.9Z"/>
<path fill="#fafafa" d="M340.3 435.1L350.8 435.1L350.8 438.4L340.8 437.3Z"/>
<path fill="#fafafa" d="M398.6 435.1L407.0 435.7L405.9 437.9L398.6 437.9Z"/>
<path fill="#fafafa" d="M345.0 488.1L352.9 484.4L355.0 478.5L361.8 475.3L374.9 468.4L377.0 473.2L383.9 473.2L383.9 470.0L393.3 478.5L404.9 478.0L415.4 477.5L425.9 477.5L428.5 482.3L436.4 489.2L444.3 497.1L446.9 498.2L462.6 503.5L473.1 505.1L481.0 510.3L483.6 518.2L488.9 526.1L488.9 534.0L496.8 536.6L509.9 539.3L520.4 547.1L533.5 549.2L546.7 552.4L555.6 559.2L565.1 561.3L568.7 573.5L562.4 586.8L549.3 602.9L546.7 613.7L545.6 627.4L540.4 641.2L536.2 652.5L524.6 658.2L515.2 661.0L500.5 669.7L496.8 681.4L495.2 690.3L487.3 702.3L477.3 712.8L471.0 722.2L457.4 729.2L447.9 727.2L444.8 724.1L451.1 733.7L453.7 738.8L449.5 750.0L425.9 763.6L394.4 881.3L365.5 763.6L369.2 736.9L375.5 717.8L376.5 699.3L379.1 681.4L381.2 661.0L383.3 641.2L381.8 631.8L373.4 624.6L355.0 613.7L346.0 597.5L338.2 581.5L325.6 565.6L324.5 557.7L329.8 549.8L326.1 545.6L330.8 534.0L336.6 526.1L339.7 520.9L345.0 513.0L344.5 502.4L342.4 496.1L346.0 491.8Z"/>
<path fill="#fafafa" d="M1250.4 -56.4L1250.4 412.7L1229.4 412.7L1213.7 418.3L1208.4 421.2L1200.5 429.6L1190.0 440.6L1179.5 448.9L1172.7 454.3L1173.2 465.1L1170.6 478.5L1167.5 484.9L1158.5 491.3L1153.3 487.1L1150.7 478.5L1144.9 467.8L1139.1 451.6L1133.8 432.9L1133.8 424.0L1132.3 417.2L1132.8 413.8L1129.6 421.2L1121.8 422.3L1113.9 413.8L1119.1 411.0L1111.3 406.4L1103.4 402.4L1101.8 399.5L1095.5 396.6L1087.6 397.2L1078.7 397.8L1066.6 396.0L1060.3 396.6L1055.1 394.8L1047.2 386.1L1035.1 387.8L1024.6 383.1L1018.3 375.3L1011.5 368.7L1006.7 369.3L1003.1 372.3L1006.2 377.7L1013.0 386.6L1015.7 393.7L1018.3 399.5L1019.4 398.3L1020.9 391.9L1022.5 396.6L1022.5 401.2L1027.2 403.0L1036.7 402.4L1042.5 396.6L1046.1 392.5L1047.7 390.2L1047.2 396.0L1049.8 402.4L1057.7 406.4L1065.6 412.7L1059.3 422.8L1055.1 428.4L1047.7 437.9L1037.7 443.4L1027.2 445.6L1025.7 451.6L1014.1 455.4L1006.2 460.3L987.8 466.2L980.0 467.3L977.9 459.7L976.8 454.3L976.3 448.9L973.7 443.4L969.5 437.9L965.8 432.3L961.6 426.8L957.4 421.2L956.9 415.5L954.8 409.8L950.6 404.1L947.4 398.3L943.2 392.5L939.5 386.6L936.4 380.7L935.3 371.7L932.7 380.7L931.1 381.9L922.7 369.3L929.5 386.6L937.9 404.1L945.3 415.5L947.4 426.8L953.7 437.9L959.0 451.6L972.1 465.1L978.9 470.5L978.9 473.2L985.2 475.9L995.7 474.3L1011.5 471.6L1020.4 471.6L1020.4 481.2L1014.1 491.8L1003.6 507.7L990.5 523.5L972.1 539.3L964.2 547.1L959.0 557.7L959.0 570.9L963.2 589.5L965.3 608.3L964.7 616.4L955.3 624.6L945.8 632.9L935.3 641.2L937.9 652.5L937.9 663.9L924.8 672.6L923.8 675.5L920.6 692.1L910.6 705.4L898.6 717.8L885.4 724.1L872.3 725.3L856.5 729.2L848.7 726.0L846.0 717.8L845.0 708.5L838.2 693.3L829.8 675.5L827.7 655.3L819.8 641.2L813.5 624.6L817.7 605.6L824.0 594.8L820.8 580.4L816.1 565.6L810.8 555.0L801.4 544.5L800.3 534.0L801.4 526.1L800.3 514.0L796.1 511.4L785.6 510.3L783.0 511.4L769.4 500.3L759.4 501.4L746.2 505.1L738.4 507.7L727.9 508.2L712.1 510.3L704.2 507.7L691.1 499.8L683.2 494.5L681.6 489.2L675.3 481.2L670.1 475.9L663.3 467.8L659.6 455.9L664.8 448.9L665.9 432.3L662.2 422.3L662.7 418.3L668.5 404.1L675.3 392.5L683.2 381.9L692.7 377.7L700.0 368.7L700.0 359.5L710.5 347.1L716.3 340.8L720.5 332.4L730.5 336.3L738.4 336.3L747.3 333.7L764.6 327.9L777.8 325.2L793.5 324.6L804.0 322.6L809.3 325.2L809.3 334.3L805.6 340.8L807.7 345.2L810.3 350.2L819.8 351.5L831.9 354.6L848.7 365.7L856.5 361.4L856.5 355.2L867.0 350.9L882.8 357.1L898.6 359.5L909.1 361.4L919.6 360.2L930.1 361.4L934.3 353.4L937.9 343.9L940.0 337.6L941.6 327.2L938.5 325.9L932.7 329.2L925.9 330.5L923.8 331.1L916.9 327.2L912.7 325.2L911.2 329.8L904.3 327.2L898.6 325.9L894.9 324.6L893.3 318.0L889.6 314.6L890.7 307.9L889.1 303.8L889.1 301.7L888.1 298.9L882.8 298.2L877.5 298.9L874.9 301.0L876.5 303.1L874.4 304.4L870.7 301.0L871.8 306.5L873.3 309.9L878.6 314.6L877.5 318.0L873.9 320.6L872.3 324.6L869.7 328.5L865.5 325.9L863.4 320.6L864.4 316.0L860.7 312.6L857.6 307.9L853.9 302.4L853.9 295.4L851.8 289.8L846.0 285.5L837.6 279.8L831.9 274.7L826.6 268.8L822.9 266.6L822.9 263.6L816.1 265.1L816.6 270.3L817.7 276.2L822.4 279.1L826.1 287.0L830.8 290.5L836.1 291.2L835.0 294.7L840.3 296.8L845.5 300.3L848.7 303.8L848.1 305.8L843.4 302.4L838.7 303.8L841.3 308.5L841.3 311.9L836.1 318.0L833.4 316.6L835.0 313.3L834.5 307.9L832.9 303.8L828.2 300.3L825.0 298.2L820.8 296.1L816.1 291.9L809.8 287.7L806.6 283.4L805.1 276.9L798.8 273.2L793.5 276.9L790.4 278.3L783.5 282.7L778.8 281.2L773.0 280.5L768.3 282.0L768.3 287.7L767.8 291.9L762.0 295.4L755.7 299.6L751.5 305.1L751.0 311.2L752.6 313.3L748.9 316.6L747.3 320.6L741.0 325.2L733.1 326.5L726.3 327.9L722.1 331.1L718.4 327.9L713.2 323.3L706.3 323.9L704.5 324.6L705.3 318.0L701.6 313.3L703.2 307.9L705.8 300.3L704.8 291.2L702.7 284.1L707.9 279.8L711.1 278.3L721.0 279.8L731.5 280.5L741.0 281.2L743.6 279.8L745.2 271.8L745.2 264.3L745.2 259.8L739.9 253.7L738.4 251.4L733.1 248.2L728.4 247.5L726.3 242.7L730.5 240.4L735.7 239.6L741.0 241.2L743.6 240.4L741.5 232.3L745.2 233.1L749.9 235.6L752.6 234.8L755.2 230.7L759.9 228.2L759.9 222.5L764.6 220.8L769.9 218.3L773.0 214.0L775.7 208.9L776.7 204.6L780.4 201.1L788.3 200.2L793.5 199.3L797.2 196.6L796.7 192.1L796.1 186.7L794.0 181.2L794.0 171.7L796.7 166.9L807.2 161.1L806.6 166.0L806.1 172.7L803.5 180.2L802.4 186.7L805.1 191.2L808.2 195.7L815.0 193.9L821.4 190.3L826.1 195.7L832.9 193.9L839.7 190.3L847.6 188.5L849.7 192.1L855.0 192.1L859.2 186.7L862.3 180.2L861.8 172.7L864.9 163.0L870.2 161.1L873.3 167.9L878.1 167.9L879.6 160.1L876.5 154.1L874.9 148.1L881.2 144.0L890.7 142.9L898.6 142.9L906.4 138.8L902.8 135.6L895.9 132.4L888.1 134.6L880.2 137.7L872.3 138.8L864.4 135.6L864.4 124.9L862.8 112.7L864.4 103.5L869.7 92.9L880.2 83.2L880.2 70.6L868.6 73.2L862.8 85.6L855.5 97.7L846.0 107.0L843.4 113.8L841.8 123.8L842.9 131.4L849.2 135.6L847.1 144.0L840.8 151.1L838.7 160.1L837.6 168.9L834.0 175.5L828.7 177.4L826.1 183.0L819.3 182.1L817.7 174.6L815.0 167.9L814.0 161.1L811.4 154.1L809.8 147.1L807.2 140.9L804.0 148.1L798.8 152.1L793.5 157.1L788.3 158.1L781.4 153.1L779.3 145.0L777.8 133.5L777.8 124.9L777.8 116.1L782.0 108.1L790.9 100.0L798.8 92.9L805.1 83.2L813.5 70.6L818.7 58.9L822.4 50.8L819.8 38.3L832.9 29.7L838.2 22.4L848.7 14.9L856.5 8.7L869.7 4.0L880.2 -3.9L890.7 -5.5L901.2 -0.7L909.1 7.2L914.3 14.9L924.8 20.9L935.3 25.3L953.7 32.6L959.5 39.7L968.4 53.5L965.8 64.1L956.3 66.7L940.6 60.2L924.8 56.2L924.3 61.5L932.7 68.0L935.3 80.7L939.5 89.3L948.5 94.1L951.1 89.3L962.6 85.6L960.5 78.2L969.5 68.0L980.0 61.5L983.6 50.8L980.5 38.3L978.9 32.6L985.2 35.5L993.1 46.7L996.2 56.2L1002.5 54.9L1003.6 45.3L1014.1 41.1L1027.2 35.5L1034.1 31.2L1037.7 35.5L1048.2 38.3L1058.7 32.6L1064.0 28.3L1068.2 14.9L1077.1 19.4L1092.9 26.8L1104.4 32.6L1111.3 36.9L1108.6 26.8L1103.4 8.7L1113.9 -20.5L1119.1 -56.4Z"/>
<path fill="#fafafa" d="M721.6 229.1L733.1 225.0L743.6 224.1L754.1 223.3L758.9 220.8L758.3 214.9L760.4 208.9L754.1 204.6L752.0 199.3L748.3 191.2L743.1 182.1L737.8 177.4L737.8 172.7L742.0 163.0L731.5 161.1L735.2 152.1L725.2 152.1L721.0 163.0L722.6 172.7L722.1 182.1L725.2 187.6L733.1 188.5L736.3 195.7L735.7 201.1L727.3 201.9L730.0 208.9L724.2 214.9L730.5 216.6L735.2 218.3L729.4 220.0L725.2 225.8Z"/>
<path fill="#fafafa" d="M700.0 217.4L697.4 211.5L699.0 201.9L698.5 193.9L712.1 183.9L720.0 185.8L720.5 194.8L719.5 201.9L718.4 211.5L708.4 214.9Z"/>
<path fill="#fafafa" d="M817.1 316.6L833.4 316.0L831.9 324.6L830.8 326.5L817.7 321.3Z"/>
<path fill="#fafafa" d="M799.8 296.1L802.4 298.2L801.9 309.9L796.7 311.9L794.6 298.9Z"/>
<path fill="#fafafa" d="M800.9 283.4L801.4 287.0L799.8 294.7L796.7 290.5L796.7 284.8Z"/>
<path fill="#fafafa" d="M874.9 335.6L880.2 334.3L889.6 335.6L888.1 337.6L881.2 338.2L875.4 336.3Z"/>
<path fill="#fafafa" d="M921.1 336.9L924.8 336.3L933.2 333.7L930.1 340.1L923.2 340.1Z"/>
<path fill="#fafafa" d="M1010.4 597.5L1016.7 616.4L1011.5 630.1L1006.2 646.8L999.4 669.7L988.9 672.6L981.0 663.9L980.0 649.7L985.2 624.6L990.5 619.1L1003.6 608.3L1006.2 601.8Z"/>
<path fill="#fafafa" d="M1172.7 482.3L1178.5 489.2L1181.1 499.8L1174.8 502.4L1170.6 497.1L1170.6 489.2Z"/>
<path fill="#fafafa" d="M816.1 176.5L817.7 181.2L815.6 186.7L809.8 183.9L810.8 178.4Z"/>
<path fill="#fafafa" d="M806.1 181.2L807.7 186.7L803.5 185.8Z"/>
<path fill="#fafafa" d="M767.8 305.1L768.3 309.2L764.1 307.9Z"/>
<path fill="#1a1a1a" d="M891.2 301.7L898.6 297.5L903.8 296.1L906.4 299.6L895.9 301.7Z"/>
<path fill="#1a1a1a" d="M1132.3 -29.1L1133.3 11.8L1134.9 41.1L1128.6 58.9L1131.7 61.5L1142.8 48.1L1161.2 52.2L1162.7 45.3L1148.0 34.1L1140.1 11.8L1142.8 -29.1Z"/>
<path fill="#1a1a1a" d="M911.7 119.4L923.8 122.7L922.7 132.4L914.3 137.7L910.1 129.2Z"/>
<path fill="#1a1a1a" d="M933.7 105.8L941.6 110.4L943.2 120.5L937.9 128.1L931.1 123.8L933.2 113.8Z"/>
<path fill="#1a1a1a" d="M817.1 144.0L825.0 145.0L822.4 152.1L817.1 151.1Z"/>
<path fill="#1a1a1a" d="M267.8 256.7L276.2 249.8L284.1 245.9L289.3 239.6L297.2 241.2L305.6 248.2L307.2 257.5L299.8 256.0L292.0 258.3L286.7 253.7L276.2 255.2Z"/>
<path fill="#1a1a1a" d="M302.5 261.3L292.0 267.3L290.9 276.2L290.4 287.0L292.0 292.6L298.8 287.0L297.7 277.6L303.0 267.3Z"/>
<path fill="#1a1a1a" d="M310.3 259.8L323.5 262.1L331.3 265.8L331.3 272.5L320.8 282.0L314.0 276.2L313.5 268.8L310.3 262.8Z"/>
<path fill="#1a1a1a" d="M314.5 288.4L326.1 286.3L335.5 284.1L330.3 289.1L321.9 294.0L315.6 294.0Z"/>
<path fill="#1a1a1a" d="M332.4 281.2L341.8 276.9L351.3 274.7L349.7 280.5L339.2 282.0Z"/>
<path fill="#1a1a1a" d="M375.5 478.0L378.1 481.2L376.0 486.0L373.4 483.3L374.4 479.1Z"/>
<path fill="#1a1a1a" d="M0.0 0.0L131.5 0.0L136.0 2.3L152.6 1.8L165.5 7.0L158.5 8.8L141.0 9.4L136.2 11.7L136.2 16.4L141.0 21.7L152.6 24.0L155.0 31.7L159.7 34.0L176.0 32.9L183.0 28.8L191.4 21.1L199.6 27.0L211.3 28.2L215.0 20.0L220.5 16.4L210.0 8.0L205.5 0.0L268.0 0.0L263.0 7.0L260.5 15.3L253.5 21.0L258.0 27.0L264.0 35.0L259.3 41.0L255.0 52.0L252.3 51.6L251.2 41.0L246.5 35.2L234.8 37.6L233.7 45.8L217.3 45.8L205.5 41.7L200.0 37.0L193.7 38.8L186.6 47.0L185.0 58.7L182.0 49.3L176.0 43.4L152.6 46.4L146.8 41.7L152.6 37.6L144.4 30.0L132.7 28.2L121.0 21.7L112.7 16.4L105.7 16.4L98.6 21.7L97.5 11.7L93.0 22.3L86.0 13.0L80.0 5.3L70.0 10.5L43.5 21.0L39.0 31.0L21.0 20.0L0.0 11.2Z"/>
<path fill="#1a1a1a" d="M94.5 65.3L109.9 58.4L121.9 55.0L127.1 56.7L120.2 63.5L134.0 60.1L132.2 72.1L123.6 75.6L116.8 82.4L111.6 80.7L104.8 80.7L103.0 77.3L109.9 68.7L101.3 67.8Z"/>
<path fill="#1a1a1a" d="M142.5 108.2L149.4 113.3L154.6 118.5L161.4 115.1L170.0 108.2L178.6 106.5L179.5 109.1L171.7 111.6L163.1 120.2L154.6 125.4L146.0 128.8L139.1 127.1L142.5 120.2L146.0 115.1Z"/>
<path fill="#1a1a1a" d="M168.3 151.1L176.9 144.3L195.8 145.1L180.3 147.7L171.7 152.8Z"/>
<path fill="#1a1a1a" d="M214.7 161.4L219.0 157.1L217.2 171.7L209.5 175.2L211.2 168.3Z"/>
<path fill="#1a1a1a" d="M231.0 198.4L237.8 198.4L246.4 221.5L244.7 229.3L237.0 218.1Z"/>
<path fill="#1a1a1a" d="M220.7 203.5L226.7 206.9L233.9 225.0L231.8 228.7L223.3 212.9Z"/>
<path fill="#1a1a1a" d="M214.7 100.5L223.3 98.7L221.5 108.2L217.2 109.9Z"/>
<path fill="#1a1a1a" d="M895.3 287.8L897.9 281.8L902.2 274.0L907.3 265.5L915.9 256.9L921.1 257.7L927.9 262.0L924.5 267.2L929.7 270.6L934.8 268.9L940.0 269.7L950.3 270.6L960.6 280.1L969.1 288.6L967.4 294.7L953.7 298.9L943.4 296.4L933.1 292.9L919.3 291.2L910.8 297.2L900.5 292.9Z"/>
<path fill="#1a1a1a" d="M932.2 260.3L941.7 255.2L955.4 252.6L952.0 258.6L943.4 264.6L936.5 266.3Z"/>
<path fill="#1a1a1a" d="M996.6 274.0L1001.8 263.7L1012.1 255.2L1022.4 253.4L1031.0 257.7L1029.3 263.7L1020.7 268.9L1015.5 272.3L1020.7 277.5L1022.4 284.3L1027.5 291.2L1037.8 296.4L1036.1 300.7L1031.0 301.5L1032.7 311.8L1034.4 325.6L1022.4 327.3L1012.1 322.1L1007.8 317.0L1009.5 305.0L1012.1 299.8L1008.6 291.2L1003.5 282.6Z"/>
<path fill="#1a1a1a" d="M1135.7 262.0L1140.9 256.9L1152.9 256.5L1164.9 255.5L1167.0 258.2L1152.9 260.6L1142.6 260.6L1139.5 268.9Z"/>
<path fill="#1a1a1a" d="M1150.3 286.9L1160.6 285.2L1158.1 289.8L1152.9 289.8Z"/>
<path fill="#1a1a1a" d="M916.8 536.8L924.5 531.7L933.1 535.1L931.4 543.7L921.9 549.7L916.8 545.4Z"/>
<path fill="#1a1a1a" d="M903.0 552.3L906.5 552.3L910.8 567.7L914.2 579.7L911.6 580.6L905.6 566.0Z"/>
<path fill="#1a1a1a" d="M928.8 584.9L932.2 585.7L933.9 598.6L935.7 609.8L933.1 609.8L930.0 596.9Z"/>
</svg></div>
<div class="a" style="left:984.2px;top:856.2px;width:226.3px;height:54.1px;background:#1e1e23;border:1.5px solid #38383e;border-radius:6px"></div>
<svg class="a" style="left:0;top:0" width="2558" height="1000"><circle cx="1007.8" cy="891.8" r="6.2" fill="#6cc3f0"/><circle cx="1030" cy="888.3" r="9" fill="#6a6dd8"/><circle cx="1057.7" cy="882.7" r="13.6" fill="#c1288f"/></svg>
<div class="a" style="left:1090.0px;top:872.5px;font-size:21.2px;line-height:1;color:#f4f4f6;font-weight:400;letter-spacing:0px;">BaseScore</div>
<div class="a" style="left:1229.7px;top:800.9px;width:56.2px;height:109.4px;background:#1e1e23;border:1.5px solid #36363c;border-radius:7px"></div>
<svg class="a" style="left:0;top:0" width="2558" height="1000" stroke="#f4f4f6" stroke-width="2.2"><line x1="1247" y1="829" x2="1268" y2="829"/><line x1="1257.5" y1="818.5" x2="1257.5" y2="839.5"/><line x1="1247" y1="882.7" x2="1268" y2="882.7"/></svg>
<div class="a" style="left:1015.5px;top:925.6px;font-size:22.3px;line-height:1;color:#f4f4f6;font-weight:400;letter-spacing:0px;">Mapbox</div>
<div class="a" style="left:1109.4px;top:925.6px;font-size:22.3px;line-height:1;color:#f4f4f6;font-weight:400;letter-spacing:0px;">© OpenStreetMap</div>
<svg class="a" style="left:0;top:0" width="600" height="1000"><circle cx="150" cy="926.5" r="16.5" fill="#e8e8e8" stroke="#222" stroke-width="1"/><path d="M141.5,935 C139.5,925 143,917.5 151.5,917.5 C158,917.5 161.5,922 161.5,927 C161.5,933 156,936 149,936 Z" fill="#1a1a1a"/><path d="M151.5,920.5 L153,925 L157.5,926.5 L153,928 L151.5,932.5 L150,928 L145.5,926.5 L150,925 Z" fill="#e8e8e8"/></svg>
<div class="a" style="left:174.3px;top:910.9px;font-size:29px;line-height:1;color:#e8e8e8;font-weight:700;letter-spacing:-0.1px;">mapbox</div>
</body></html>
